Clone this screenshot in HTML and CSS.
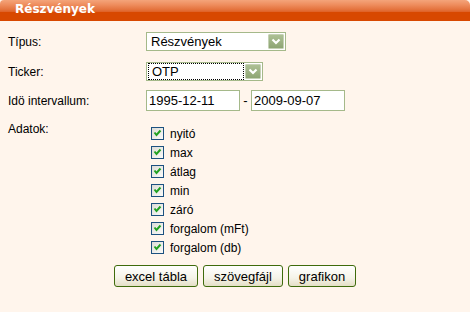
FILE: index.html
```
<!DOCTYPE html>
<html lang="hu">
<head>
  <meta charset="UTF-8" />
  <title>Részvények</title>
  <link rel="stylesheet" href="styles.css">
</head>
<body>
  <div class="panel-head">Részvények</div>

  <div class="form">
    <div class="row row-type">
      <div class="label">Típus:</div>
      <div class="select select-wide">
        <span class="value">Részvények</span>
        <span class="arrow"><svg width="16" height="15" viewBox="0 0 16 15"><polyline points="4.5,5.5 8,9 11.5,5.5" fill="none" stroke="#fff" stroke-width="2.2"/></svg></span>
      </div>
    </div>

    <div class="row row-ticker">
      <div class="label">Ticker:</div>
      <div class="select select-narrow">
        <span class="value focused">OTP</span>
        <span class="arrow"><svg width="16" height="15" viewBox="0 0 16 15"><polyline points="4.5,5.5 8,9 11.5,5.5" fill="none" stroke="#fff" stroke-width="2.2"/></svg></span>
      </div>
    </div>

    <div class="row row-dates">
      <div class="label">Idö intervallum:</div>
      <input class="date" type="text" value="1995-12-11" />
      <span class="sep">-</span>
      <input class="date" type="text" value="2009-09-07" />
    </div>

    <div class="row row-data">
      <div class="label">Adatok:</div>
      <ul class="checklist">
        <li><span class="check"></span>nyitó</li>
        <li><span class="check"></span>max</li>
        <li><span class="check"></span>átlag</li>
        <li><span class="check"></span>min</li>
        <li><span class="check"></span>záró</li>
        <li><span class="check"></span>forgalom (mFt)</li>
        <li><span class="check"></span>forgalom (db)</li>
      </ul>
    </div>

    <div class="buttons">
      <button>excel tábla</button>
      <button>szövegfájl</button>
      <button>grafikon</button>
    </div>
  </div>
</body>
</html>
```

FILE: styles.css
```
body {
  margin: 0;
  background-color: #fff5ec;
  font-family: 'Liberation Sans', Arial, sans-serif;
  font-size: 12px;
  color: #000;
}
.panel-head {
  height: 21px;
  box-sizing: border-box;
  padding-left: 15px;
  line-height: 18px;
  font-family: 'DejaVu Sans', Verdana, sans-serif;
  font-weight: bold;
  font-size: 12px;
  color: #fff;
  border-radius: 4px 5px 0 0;
  background: linear-gradient(#f4a47a 0, #ee8c5c 5px, #e3703a 10px, #df6024 12px, #d84800 12px, #d84800 100%);
}
.form {
  padding: 0 8px;
}
.row {
  display: flex;
  align-items: center;
}
.row .label {
  width: 138px;
  flex: none;
}
.row-type {
  margin-top: 11px;
}
.row-ticker {
  margin-top: 11px;
}
.row-dates {
  margin-top: 9px;
}
.row-data {
  margin-top: 11px;
  align-items: flex-start;
}
.row-data .label {
  line-height: 15px;
}
.select {
  display: flex;
  align-items: center;
  height: 19px;
  box-sizing: border-box;
  border: 1px solid #a5b98a;
  background-color: #fff;
  font-size: 13px;
}
.select-wide {
  width: 140px;
}
.select-narrow {
  width: 117px;
}
.select .value {
  flex: 1;
  padding-left: 4px;
  line-height: 15px;
}
.select .focused {
  margin: 0 1px 0 1px;
  padding-left: 3px;
  border: 1px dotted #000;
}
.select .arrow {
  display: block;
  width: 16px;
  height: 15px;
  margin-right: 1px;
  border: 1px solid #c5d1b5;
  border-radius: 1px;
  box-sizing: border-box;
  background: linear-gradient(#adc094, #8ea574);
}
.select .arrow svg {
  display: block;
  margin: -1px 0 0 -1px;
}
.date {
  width: 94px;
  height: 21px;
  box-sizing: border-box;
  margin: 0;
  padding: 0 2px;
  border: 1px solid #a5b98a;
  background-color: #fff;
  font-family: 'Liberation Sans', Arial, sans-serif;
  font-size: 13px;
  color: #000;
}
.sep {
  width: 11px;
  text-align: center;
  font-size: 13px;
}
.checklist {
  list-style: none;
  margin: 2px 0 0 5px;
  padding: 0;
}
.checklist li {
  display: flex;
  align-items: center;
  height: 19px;
}
.check {
  width: 13px;
  height: 13px;
  box-sizing: border-box;
  margin-right: 6px;
  border: 1px solid #1c5180;
  background: url("data:image/svg+xml,%3Csvg xmlns='http://www.w3.org/2000/svg' width='11' height='11'%3E%3Cpolyline points='2.5,4.5 4.5,7 8.5,2.5' fill='none' stroke='%2321a121' stroke-width='2'/%3E%3C/svg%3E") no-repeat, linear-gradient(135deg, #dcdcd7, #fbfbf9);
}
.buttons {
  display: flex;
  justify-content: center;
  gap: 5px;
  margin-top: 8px;
}
.buttons button {
  height: 22px;
  padding: 0 10px;
  border: 1px solid #3f6b0c;
  border-radius: 3px;
  background: linear-gradient(#ffffff, #f5f3e8 60%, #e4dfc6);
  font-family: 'Liberation Sans', Arial, sans-serif;
  font-size: 13px;
  color: #000;
}
```
